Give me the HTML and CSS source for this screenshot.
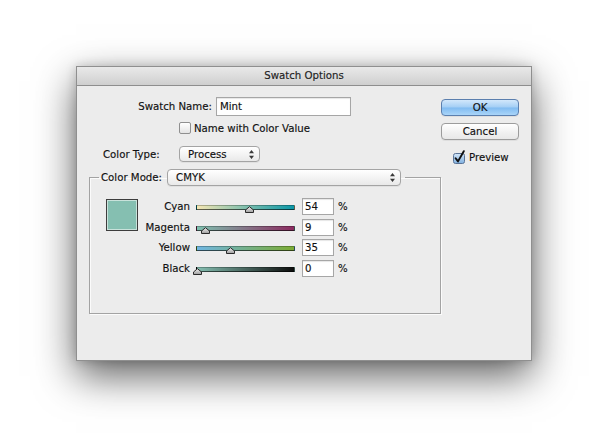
FILE: index.html
```html
<!DOCTYPE html>
<html>
<head>
<meta charset="utf-8">
<title>Swatch Options</title>
<link rel="stylesheet" href="styles.css">
</head>
<body>
<div class="stage">
  <div class="dialog">
    <div class="titlebar">Swatch Options</div>
    <div class="body">
      <div class="main">
        <div class="row name-row">
          <span class="name-label">Swatch Name:</span>
          <div class="field name-field">Mint</div>
        </div>
        <div class="row check-row">
          <span class="checkbox"></span>
          <span>Name with Color Value</span>
        </div>
        <div class="row type-row">
          <span class="type-label">Color Type:</span>
          <div class="popup type-popup">
            <span>Process</span>
            <svg class="arrows" width="5" height="9" viewBox="0 0 5 9"><path d="M2.5 0 L5 3.2 L0 3.2 Z M2.5 9 L5 5.8 L0 5.8 Z" fill="#3a3a3a"/></svg>
          </div>
        </div>
        <fieldset class="group">
          <legend class="group-legend">
            <div class="legend-inner">
              <span>Color Mode:</span>
              <div class="popup mode-popup">
                <span>CMYK</span>
                <svg class="arrows" width="5" height="9" viewBox="0 0 5 9"><path d="M2.5 0 L5 3.2 L0 3.2 Z M2.5 9 L5 5.8 L0 5.8 Z" fill="#3a3a3a"/></svg>
              </div>
            </div>
          </legend>
          <div class="group-content">
            <div class="swatch"></div>
            <div class="sliders">
              <span class="s-label">Cyan</span>
              <div class="track track-cyan">
                <svg class="thumb" style="left:54%" width="9" height="7" viewBox="0 0 9 7"><path d="M0.5 6.5 V4 L4.5 0.7 L8.5 4 V6.5 Z" fill="url(#tg)" stroke="#2b2b2b" stroke-width="1"/></svg>
              </div>
              <div class="field num">54</div>
              <span class="pct">%</span>

              <span class="s-label">Magenta</span>
              <div class="track track-magenta">
                <svg class="thumb" style="left:9%" width="9" height="7" viewBox="0 0 9 7"><path d="M0.5 6.5 V4 L4.5 0.7 L8.5 4 V6.5 Z" fill="url(#tg)" stroke="#2b2b2b" stroke-width="1"/></svg>
              </div>
              <div class="field num">9</div>
              <span class="pct">%</span>

              <span class="s-label">Yellow</span>
              <div class="track track-yellow">
                <svg class="thumb" style="left:35%" width="9" height="7" viewBox="0 0 9 7"><path d="M0.5 6.5 V4 L4.5 0.7 L8.5 4 V6.5 Z" fill="url(#tg)" stroke="#2b2b2b" stroke-width="1"/></svg>
              </div>
              <div class="field num">35</div>
              <span class="pct">%</span>

              <span class="s-label">Black</span>
              <div class="track track-black">
                <svg class="thumb" style="left:0%" width="9" height="7" viewBox="0 0 9 7"><path d="M0.5 6.5 V4 L4.5 0.7 L8.5 4 V6.5 Z" fill="url(#tg)" stroke="#2b2b2b" stroke-width="1"/></svg>
              </div>
              <div class="field num">0</div>
              <span class="pct">%</span>
            </div>
          </div>
        </fieldset>
      </div>
      <div class="side">
        <div class="btn btn-default">OK</div>
        <div class="btn">Cancel</div>
        <div class="preview">
          <svg class="pcheck" width="13" height="14" viewBox="0 0 13 14">
            <defs>
              <linearGradient id="cbg" x1="0" y1="0" x2="0" y2="1">
                <stop offset="0" stop-color="#d3e6f8"/>
                <stop offset="1" stop-color="#7fb0e0"/>
              </linearGradient>
              <linearGradient id="tg" x1="0" y1="0" x2="0" y2="1">
                <stop offset="0" stop-color="#f2f2f2"/>
                <stop offset="1" stop-color="#9c9c9c"/>
              </linearGradient>
            </defs>
            <rect x="0.5" y="3.5" width="11" height="10" rx="2" fill="url(#cbg)" stroke="#5a7396"/>
            <path d="M2.6 8.2 L5 11.4 L10.8 1.2" fill="none" stroke="#111" stroke-width="1.9" stroke-linecap="round" stroke-linejoin="round"/>
          </svg>
          <span>Preview</span>
        </div>
      </div>
    </div>
  </div>
</div>
</body>
</html>
```

FILE: styles.css
```css
* {
  box-sizing: border-box;
}

html,
body {
  margin: 0;
  padding: 0;
  background: #ffffff;
}

body {
  font-family: "DejaVu Sans", "Liberation Sans", sans-serif;
  font-size: 10.2px;
  color: #111111;
  -webkit-text-stroke: 0.15px #111111;
}

.stage {
  width: 600px;
  height: 442px;
  padding: 66px 0 0 76px;
  overflow: hidden;
}

.dialog {
  width: 456px;
  height: 295px;
  background: #ececec;
  border: 1px solid #8f8f8f;
  box-shadow: 0 15px 38px rgba(0, 0, 0, 0.62), 0 0 10px rgba(0, 0, 0, 0.18);
  display: flex;
  flex-direction: column;
}

.titlebar {
  height: 19px;
  border-bottom: 1px solid #8e8e8e;
  background: linear-gradient(#e9e9e9, #cfcfcf);
  text-align: center;
  line-height: 18px;
  color: #262626;
}

.body {
  flex: 1;
  display: flex;
}

.main {
  width: 364px;
}

.side {
  width: 78px;
  margin-top: 13px;
  display: flex;
  flex-direction: column;
}

.row {
  display: flex;
  align-items: center;
}

.name-row {
  height: 19px;
  margin-top: 11px;
}

.name-label {
  width: 139px;
  text-align: right;
  padding-right: 4px;
}

.field {
  background: #ffffff;
  border: 1px solid #a6a6a6;
  box-shadow: inset 0 1px 1px rgba(0, 0, 0, 0.1);
  display: flex;
  align-items: center;
  padding-left: 3px;
}

.name-field {
  width: 135px;
  height: 19px;
}

.check-row {
  height: 12px;
  margin-top: 6px;
  padding-left: 102px;
}

.checkbox {
  width: 12px;
  height: 12px;
  border: 1px solid #8f8f8f;
  border-radius: 2px;
  background: linear-gradient(#ffffff, #e4e4e4);
  margin-right: 3px;
}

.type-row {
  height: 16px;
  margin-top: 12px;
  padding-left: 26px;
}

.type-label {
  width: 76px;
}

.popup {
  height: 16px;
  border: 1px solid #a4a4a4;
  border-radius: 4px;
  background: linear-gradient(#ffffff, #f3f3f3 55%, #e9e9e9);
  box-shadow: 0 1px 0 rgba(0, 0, 0, 0.05);
  display: flex;
  align-items: center;
  justify-content: space-between;
  padding: 0 5px 0 8px;
}

.type-popup {
  width: 81px;
}

.mode-popup {
  width: 234px;
  height: 17px;
  margin-left: 5px;
}

.arrows {
  display: block;
}

.group {
  margin: 7px 0 0 12px;
  padding: 12px 0 0 0;
  width: 352px;
  height: 145px;
  min-width: 0;
  border: 1px solid #a3a3a3;
  box-shadow: inset 1px 1px 0 #fbfbfb, 1px 1px 0 #fbfbfb;
}

.group-legend {
  margin-left: 9px;
  padding: 0 4px 0 2px;
}

.legend-inner {
  display: flex;
  align-items: center;
  height: 17px;
}

.group-content {
  display: flex;
  align-items: flex-start;
  padding-left: 16px;
}

.swatch {
  width: 32px;
  height: 32px;
  margin-top: 1px;
  background: #85bfb1;
  border: 1px solid #3d3d3d;
  box-shadow: inset 0 0 0 1px #c9e2db;
}

.sliders {
  display: grid;
  grid-template-columns: 58px 106px 35px auto;
  grid-auto-rows: 17px;
  row-gap: 3.67px;
  align-items: center;
}

.s-label {
  text-align: right;
  padding-right: 6px;
}

.track {
  position: relative;
  width: 99px;
  height: 5px;
  margin-top: 2px;
  border: 1px solid rgba(0, 0, 0, 0.6);
  border-top-color: rgba(0, 0, 0, 0.25);
}

.track-cyan {
  background: linear-gradient(to right, #f4e6b3, #0a97a7);
}

.track-magenta {
  background: linear-gradient(to right, #7ec0af, #8c2b60);
}

.track-yellow {
  background: linear-gradient(to right, #6fb6e2, #7bab33);
}

.track-black {
  background: linear-gradient(to right, #85bfb1, #0c0c0c);
}

.thumb {
  position: absolute;
  top: 0;
  margin-left: -4.5px;
  display: block;
}

.num {
  width: 32px;
  height: 17px;
  padding-left: 2px;
}

.pct {
  padding-left: 1px;
}

.btn {
  height: 17px;
  border: 1px solid #9c9c9c;
  border-radius: 4px;
  background: linear-gradient(#ffffff, #f0f0f0 60%, #e8e8e8);
  box-shadow: 0 1px 0 rgba(0, 0, 0, 0.06);
  display: flex;
  align-items: center;
  justify-content: center;
}

.btn-default {
  border-color: #5b7fae;
  background: linear-gradient(#d2e7fb, #a3cef5 48%, #80bbf1 52%, #a9d4f8);
}

.btn + .btn {
  margin-top: 7px;
}

.preview {
  margin-top: 12px;
  padding-left: 12px;
  height: 11px;
  display: flex;
  align-items: flex-end;
}

.pcheck {
  display: block;
  margin-right: 3px;
  margin-bottom: -1px;
}
```
